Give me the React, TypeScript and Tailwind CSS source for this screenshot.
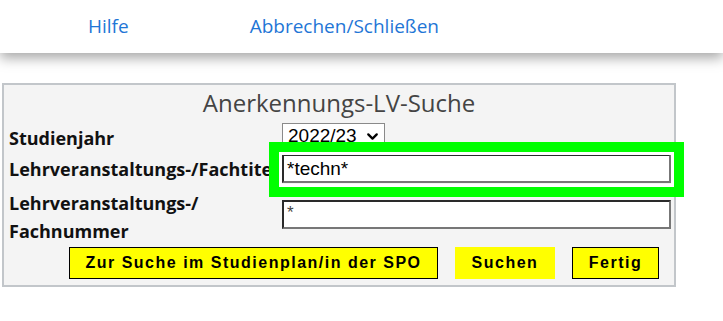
import { ChevronDown } from "lucide-react";

const openSans = "font-['Open_Sans',sans-serif]";
const arial = "font-['Liberation_Sans',Arial,sans-serif]";

function YellowButton({ label, width, bordered = true }: { label: string; width: string; bordered?: boolean }) {
  return (
    <button
      className={`${arial} ${width} h-[32px] bg-[#ffff00] text-[16px] font-bold tracking-[1.5px] text-black ${
        bordered ? "border border-black" : "border border-[#ffff00]"
      }`}
    >
      {label}
    </button>
  );
}

export default function App() {
  return (
    <div className="min-h-screen bg-white">
      <header className={`${openSans} relative z-10 flex h-[53px] items-center bg-white text-[19px] text-[#1f76d6] shadow-[0_5px_12px_rgba(0,0,0,0.35)]`}>
        <a className="ml-[88px]">Hilfe</a>
        <a className="ml-[121px]">Abbrechen/Schließen</a>
      </header>

      <main className="relative px-[2px] pt-[30px]">
        <div className="w-[674px] border-2 border-[#c2c6ca] bg-[#f4f4f4]">
          <div className={`${openSans} flex h-[36px] items-center justify-center text-[24px] text-[#444]`}>
            Anerkennungs-LV-Suche
          </div>

          <div className={`${openSans} pl-[5px] text-[18px] font-bold leading-[28px] text-[#111]`}>
            <div className="flex h-[31px] items-start">
              <div className="w-[273px] pt-[3px]">Studienjahr</div>
              <div className={`${arial} mt-[2px] flex h-[26px] w-[103px] items-center gap-[7px] border border-[#8a8a8a] bg-white pl-[5px] text-[19px] font-normal text-black`}>
                2022/23
                <ChevronDown size={17} strokeWidth={3.2} />
              </div>
            </div>

            <div className="flex h-[33px] items-center">
              <div className="w-[273px] whitespace-nowrap overflow-hidden">Lehrveranstaltungs-/Fachtitel</div>
              <div className={`${arial} flex h-[29px] w-[389px] items-center border-2 border-t-[#2a2a2a] border-l-[#2a2a2a] border-b-[#777] border-r-[#777] bg-white pl-[3px] text-[19px] font-normal text-black`}>
                *techn*
              </div>
            </div>

            <div className="flex h-[60px] items-start">
              <div className="w-[273px] pt-[4px]">
                Lehrveranstaltungs-/
                <br />
                Fachnummer
              </div>
              <div className={`${arial} mt-[15px] flex h-[29px] w-[389px] items-start border-2 border-t-[#2a2a2a] border-l-[#2a2a2a] border-b-[#777] border-r-[#777] bg-white pl-[3px] text-[17px] font-normal leading-[22px] text-[#444]`}>
                *
              </div>
            </div>
          </div>

          <div className="flex gap-[17px] pb-[6px] pl-[65px] pt-[2px]">
            <YellowButton label="Zur Suche im Studienplan/in der SPO" width="w-[369px]" />
            <YellowButton label="Suchen" width="w-[100px]" bordered={false} />
            <YellowButton label="Fertig" width="w-[87px]" />
          </div>
        </div>

        {/* green highlight frame over the title field */}
        <div className="pointer-events-none absolute left-[269px] top-[89px] h-[55px] w-[415px] border-[10px] border-[#00ff00]">
          <div className="h-full w-full border-[3px] border-white" />
        </div>
      </main>
    </div>
  );
}
